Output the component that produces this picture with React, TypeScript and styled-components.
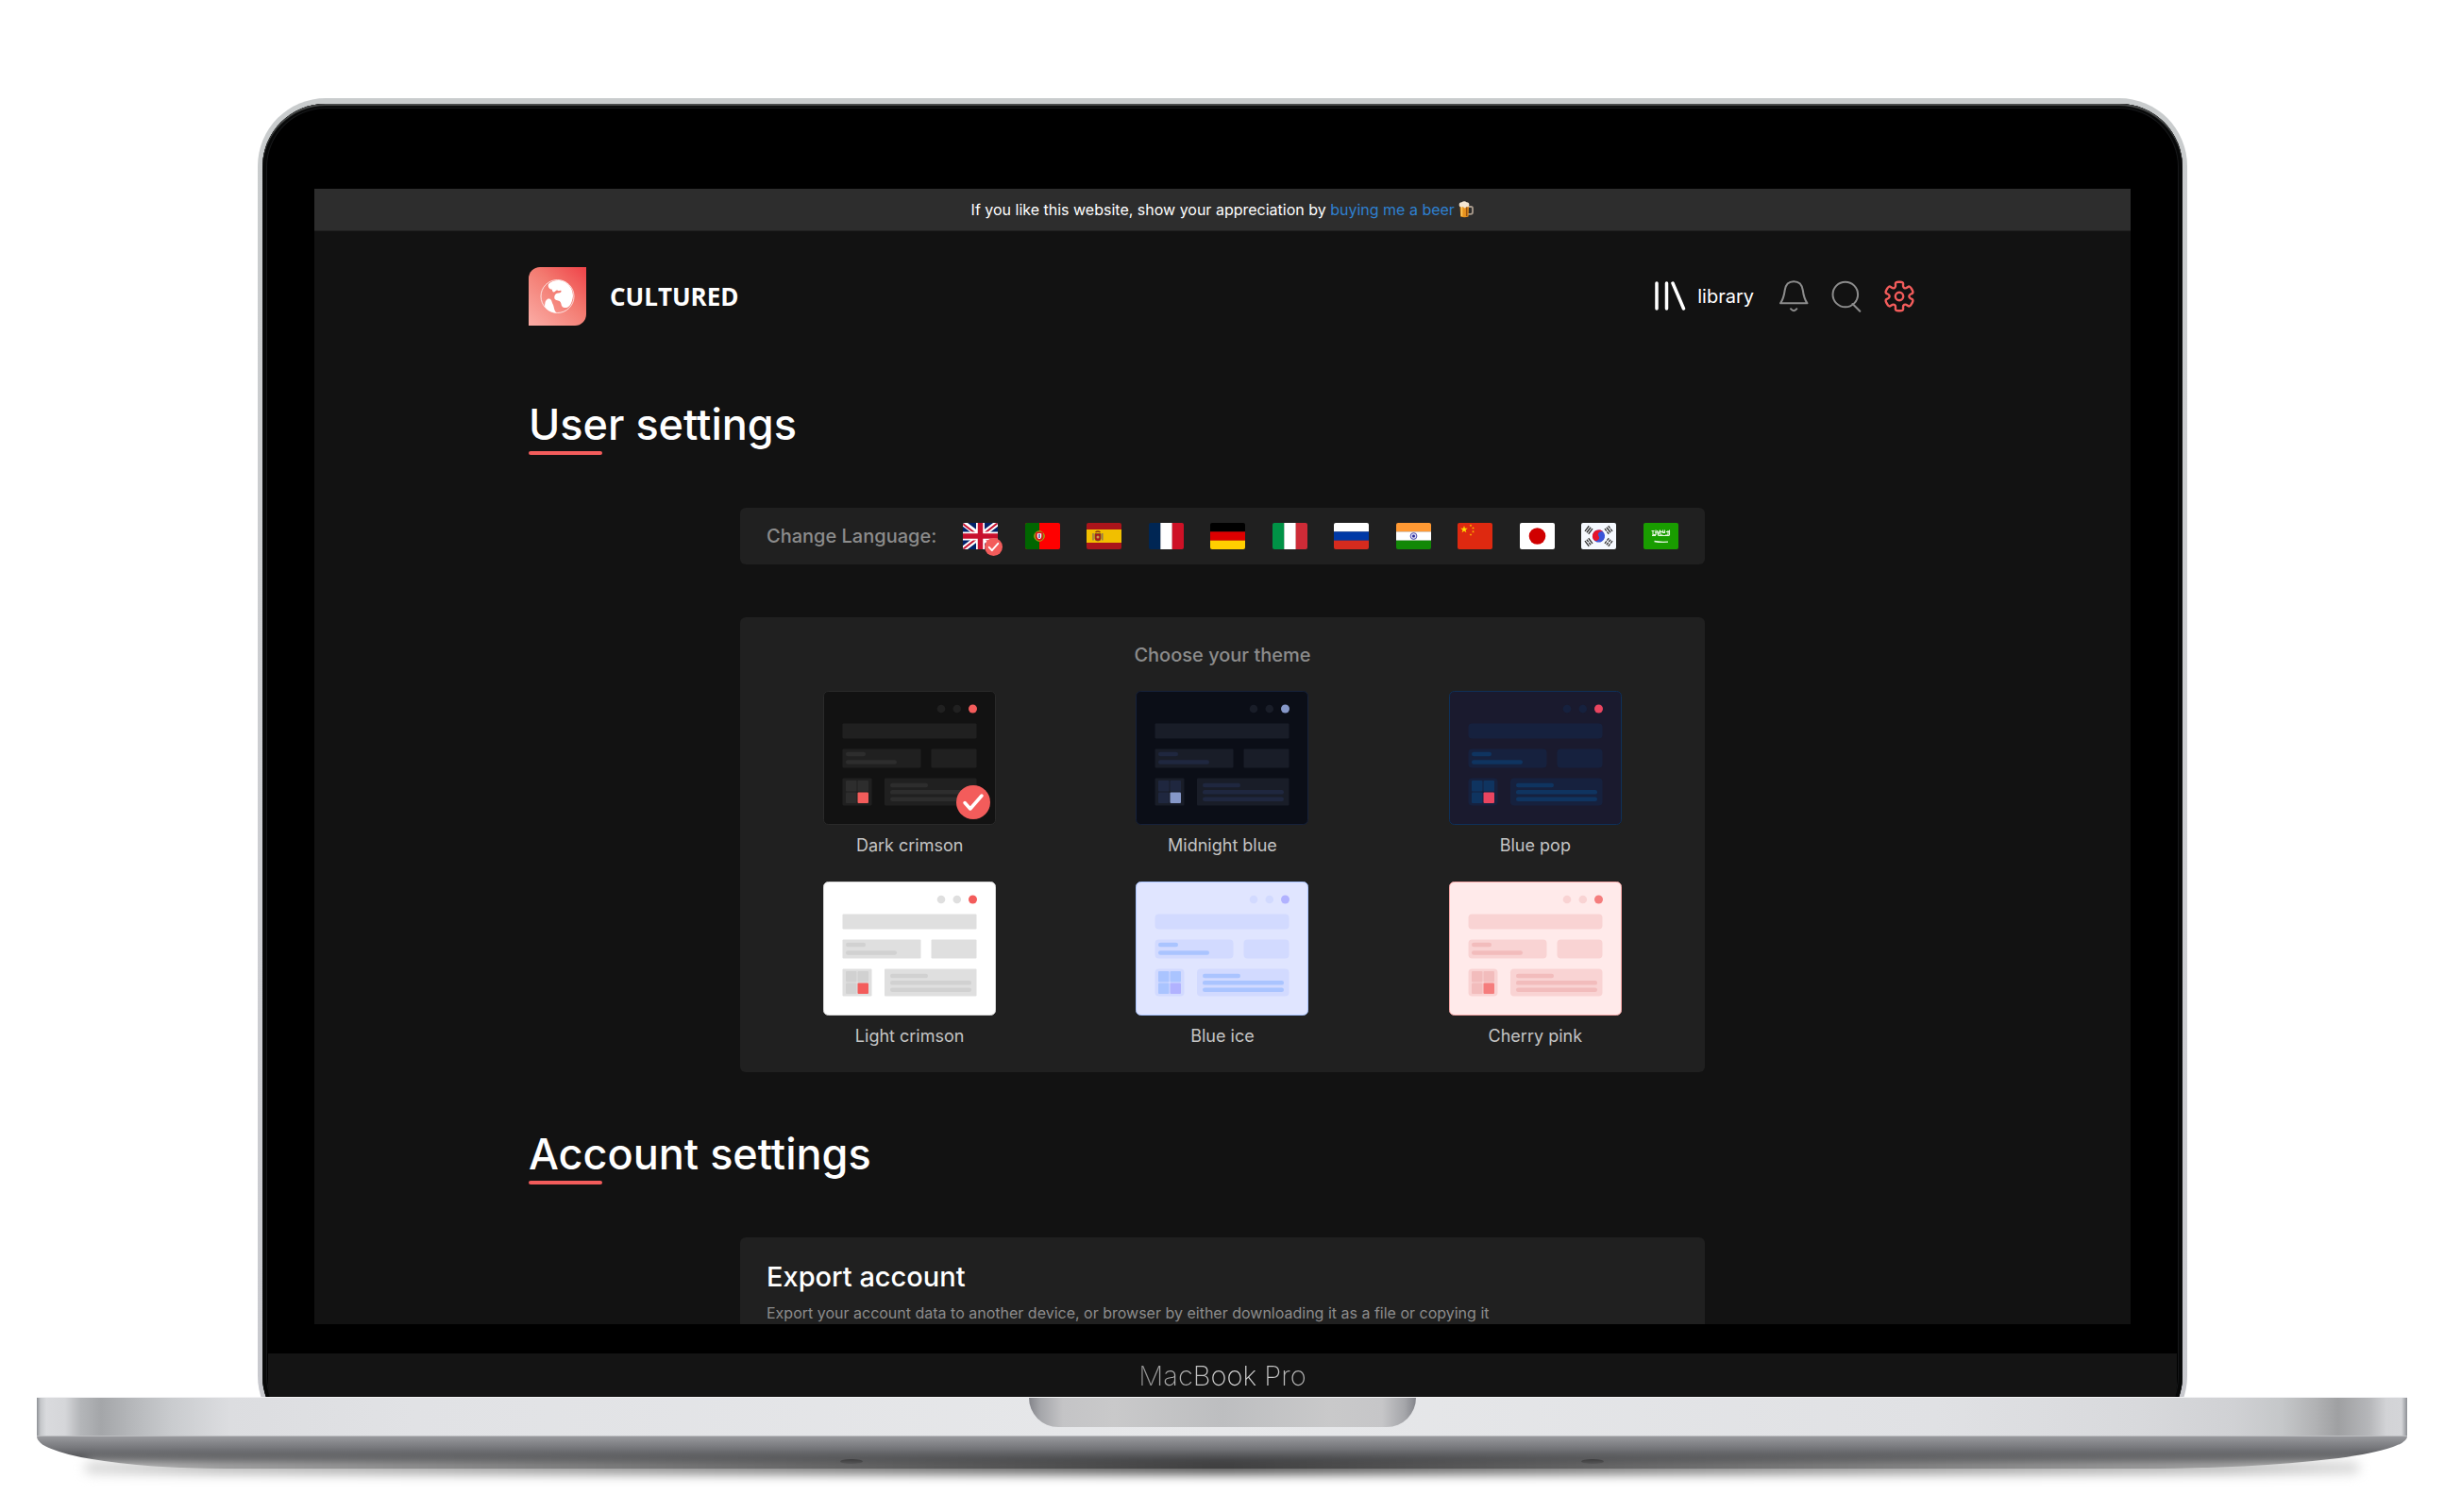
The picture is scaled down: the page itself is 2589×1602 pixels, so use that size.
import React, { useState } from 'react';
import styled, { createGlobalStyle, css } from 'styled-components';

const c = {
  bg: '#121212',
  panel: '#202020',
  banner: '#2d2d2d',
  accent: '#f35c5b',
  muted: '#8c8c8c',
  label: '#c4c4c4',
  link: '#2f80d0',
};

const GlobalStyle = createGlobalStyle`
  * { box-sizing: border-box; }
  body {
    margin: 0;
    background: #fff;
    font-family: Inter, "Liberation Sans", sans-serif;
  }
  h1, h2, h3, p, ul { margin: 0; padding: 0; }
  h1, h2, h3 { font-weight: 500; }
  ul { list-style: none; }
  svg { display: block; }
  button { border: 0; padding: 0; background: none; color: inherit; font: inherit; cursor: pointer; }
  a { color: inherit; text-decoration: none; }
`;

/* ---------- laptop ---------- */

const Stage = styled.div`
  padding: 104px 39px 32px;
  overflow: hidden;
`;

const Lid = styled.div`
  margin: 0 233px -50px 234px;
  padding: 6px 5px 5px;
  border-radius: 72px;
  background: linear-gradient(180deg, #c9cccd, #cdced2 60%, #c8c9ce);
`;

const Bezel = styled.div`
  padding: 90px 55px 0;
  border-radius: 67px;
  background: #000;
  box-shadow: inset 0 2px 1px #4c4e4e, inset 0 0 0 4px #070808, inset 0 0 0 5px #17181a;
`;

const Screen = styled.div`
  aspect-ratio: 16 / 10;
  overflow: hidden;
  background: ${c.bg};
  color: #fff;
`;

const Chin = styled.div`
  margin: 31px -49px 0;
  height: 91px;
  padding-top: 6px;
  border-radius: 0 0 58px 58px;
  background: #141414;
  text-align: center;
  font-size: 29px;
  font-weight: 200;
  line-height: 36px;
`;

const Model = styled.span`
  background: linear-gradient(90deg, #8f8f8f, #dcdcdc 55%, #b0b0b0);
  background-clip: text;
  color: transparent;
`;

const Base = styled.div`
  position: relative;
`;

const Deck = styled.div`
  position: relative;
  display: flex;
  justify-content: center;
  height: 42px;
  border-top: 1px solid #f2f2f3;
  border-bottom: 1px solid #bcbdc0;
  background: linear-gradient(
    90deg,
    #8d9095 0,
    #c5c7ca 4px,
    #d9dadd 10px,
    #d5d6d9 30px,
    #b4b6b9 46px,
    #a4a6a9 68px,
    #b8babd 106px,
    #c9cbce 142px,
    #dcdde0 204px,
    #e1e2e5 400px,
    #e7e8ea 50%,
    #e0e1e4 calc(100% - 500px),
    #d8d9dc calc(100% - 283px),
    #d0d1d4 calc(100% - 183px),
    #c5c7c9 calc(100% - 133px),
    #b1b2b4 calc(100% - 97px),
    #9fa0a2 calc(100% - 73px),
    #b6b7ba calc(100% - 40px),
    #d2d3d6 calc(100% - 22px),
    #d4d5d8 calc(100% - 6px),
    #8d9095 100%
  );
`;

const Notch = styled.div`
  width: 410px;
  height: 31px;
  border-radius: 0 0 36px 36px;
  background: linear-gradient(90deg, #83848a, #a5a6aa 12px, #c4c4c6 36px, #c9c9ca 90px, #bdbec0 50%, #c9c9ca calc(100% - 90px), #c6c6c8 calc(100% - 36px), #a5a6aa calc(100% - 12px), #83848a);
`;

const Underside = styled.div`
  position: relative;
  display: flex;
  justify-content: space-between;
  align-items: flex-end;
  height: 34px;
  padding: 0 851px 5px;
  border-radius: 0 0 280px 200px / 0 0 34px 34px;
  background: linear-gradient(180deg, #98999d, #727377 40%, #47484b 75%, #2a2b2d);
`;

const Foot = styled.i`
  width: 24px;
  height: 5px;
  border-radius: 50%;
  background: #1d1d1f;
`;

const Shadow = styled.div`
  height: 14px;
  margin: -8px 50px 0;
  border-radius: 50px;
  background: linear-gradient(90deg, #ddd, #bbb 6%, #8a8a8a 25%, #444 50%, #8a8a8a 75%, #bbb 94%, #ddd);
  filter: blur(6px);
`;

/* ---------- page ---------- */

const Banner = styled.p`
  padding: 10px 0;
  border-bottom: 1px solid #212121;
  background: ${c.banner};
  font-size: 16px;
  line-height: 24px;
  text-align: center;

  svg {
    display: inline-block;
    vertical-align: -3px;
  }
`;

const BannerLink = styled.a`
  color: ${c.link};
`;

const Container = styled.div`
  width: 77%;
  max-width: 1470px;
  margin: 0 auto;
`;

const Header = styled.header`
  display: flex;
  justify-content: space-between;
  align-items: center;
  padding: 38px 0;
`;

const Brand = styled.a`
  display: flex;
  align-items: center;
  gap: 24px;
  font-family: "Open Sans", "Noto Sans", sans-serif;
  font-size: 26px;
  font-weight: 700;
  line-height: 32px;
`;

const Nav = styled.nav`
  display: flex;
  align-items: center;
  gap: 24px;
  padding-right: 2px;
  font-size: 20px;
  line-height: 24px;
`;

const LibraryLink = styled.a`
  display: flex;
  align-items: center;
  gap: 12px;
  padding-right: 2px;
`;

const NavButton = styled.button<{ $active?: boolean }>`
  color: ${(p) => (p.$active ? c.accent : c.muted)};
`;

const Main = styled.main`
  display: flex;
  flex-direction: column;
  gap: 59px;
  padding-top: 39px;
`;

const Section = styled.section`
  display: flex;
  flex-direction: column;
  align-items: center;
  gap: 56px;
`;

const Title = styled.h1`
  align-self: stretch;
  font-size: 45px;
  line-height: 56px;

  &::after {
    content: '';
    display: block;
    width: 78px;
    height: 4px;
    border-radius: 2px;
    background: ${c.accent};
  }
`;

const panel = css`
  width: 100%;
  max-width: 1022px;
  border-radius: 6px;
  background: ${c.panel};
`;

const LanguagePanel = styled.div`
  ${panel}
  display: flex;
  align-items: center;
  gap: 28px;
  padding: 16px 28px;
  color: ${c.muted};
  font-size: 20px;
  font-weight: 500;
  line-height: 28px;
`;

const Flags = styled.ul`
  flex: 1;
  display: flex;
  justify-content: space-between;
`;

const FlagButton = styled.button`
  position: relative;
  display: block;
`;

const FlagArt = styled.svg`
  width: 37px;
  height: 28px;
  border-radius: 2px;
`;

const Badge = styled.svg<{ $small?: boolean }>`
  position: absolute;
  ${(p) =>
    p.$small
      ? css`
          right: -5px;
          bottom: -7px;
          width: 19px;
        `
      : css`
          right: 6px;
          bottom: 6px;
          width: 36px;
        `}
`;

const ThemePanel = styled.div`
  ${panel}
  padding: 28px 14px 26px;
`;

const PanelTitle = styled.h2`
  color: ${c.muted};
  font-size: 20px;
  line-height: 24px;
  text-align: center;
`;

const ThemeGrid = styled.div`
  display: grid;
  grid-template-columns: repeat(3, 1fr);
  gap: 26px 0;
  justify-items: center;
  padding-top: 26px;
`;

const ThemeButton = styled.button`
  display: grid;
  justify-items: center;
  gap: 10px;
  color: ${c.label};
  font-size: 18px;
  font-weight: 400;
  line-height: 24px;
`;

const Preview = styled.span`
  position: relative;
  display: block;
`;

const ExportPanel = styled.div`
  ${panel}
  display: grid;
  gap: 8px;
  padding: 24px 28px;
`;

const ExportTitle = styled.h3`
  font-size: 29px;
  line-height: 36px;
`;

const ExportText = styled.p`
  color: ${c.muted};
  font-size: 16px;
  line-height: 24px;
`;

/* ---------- drawings ---------- */

const Beer = () => (
  <svg width="16" height="18" viewBox="0 0 16 18" aria-label="beer" role="img">
    <path d="M10 6h3.2c1 0 1.8.8 1.8 1.8v4c0 1.2-.8 2-2 2H10" fill="none" stroke="#a89a8c" strokeWidth="1.8" />
    <path d="M1.5 4h9.500l-.5 12.500q-4.200 1.500-8.300 0z" fill="#e8931f" />
    <path d="M3.500 6v10" stroke="#ffc95a" strokeWidth="1.5" />
    <path d="M8.700 6v10" stroke="#9c5410" strokeWidth="1.5" />
    <path d="M1 5.500C0 3 1.500 1 3.500 1.300 5-.2 7.500 0 8.500 1.200c2.500-.2 3.500 2 2.500 4.300-1 1.300-2 .2-3 .9-1 2-2.500 1-3-.3-1.500.7-3 .4-4-.6z" fill="#f4e6d2" />
  </svg>
);

const Logo = () => (
  <svg width="62" height="62" viewBox="0 0 62 62" aria-hidden="true">
    <defs>
      <linearGradient id="logo" x1="1" y1="0" x2="0.1" y2="1">
        <stop offset="0" stopColor="#ef4248" />
        <stop offset="0.45" stopColor="#f37a70" />
        <stop offset="1" stopColor="#faa9a2" />
      </linearGradient>
    </defs>
    <path d="M12 0H61V50A12 12 0 0 1 49 62H0V12A12 12 0 0 1 12 0z" fill="url(#logo)" />
    <circle cx="30.5" cy="31" r="17.5" fill="none" stroke="#fff" strokeOpacity=".75" />
    <path
      d="M21 18C24 14.500 29 13.500 33 14c8 1 14 8 14 16.500C46.500 36 44.500 41 41.500 42.500c-2 1-5 .8-6.200-1-1-1.700-.5-4-2.600-5.500-2-.8-4.700-.6-5.400-3-.4-2.700.8-4.600 2.700-5.300 2-.2 4.300-.4 4.600-2.300-1-1.500-2.400.8-3.800-.6-1.600-1.600-2.800 2.300-5 1.500-1.300-1.200-.3-2-1.500-2.700-2.300 0-4.300-2.800-3.300-5.600z"
      fill="#fff"
    />
    <path d="M18.700 35c1.300-2.200 4.300-2 5.300 0 .7 1.800 1 3 2 5 1.200 3 .7 5.500 3.300 8.400-5-.2-9-2.200-12-6-.6-2.400.2-3.600.2-4.600 0-1 .5-1.700 1.200-2.800z" fill="#fff" />
  </svg>
);

const LibraryIcon = () => (
  <svg width="33" height="34" viewBox="0 0 33 34" fill="none" stroke="#fff" strokeWidth="3.5" strokeLinecap="round" aria-hidden="true">
    <path d="M2 3v27M12.500 3v27M19 3l11.500 27" />
  </svg>
);

const BellIcon = () => (
  <svg width="32" height="34" viewBox="0 0 32 34" fill="none" stroke="currentColor" strokeWidth="2" strokeLinecap="round" strokeLinejoin="round" aria-hidden="true">
    <path d="M2 24.300H30.500C27 19.500 26.500 16 25.800 10.500 25 4.500 21.500 1.200 16.200 1.200S7.500 4.500 6.700 10.500C6 16 5.500 19.500 2 24.300z" />
    <path d="M13 30.200q3.200 4 6.400 0" />
  </svg>
);

const SearchIcon = () => (
  <svg width="32" height="34" viewBox="0 0 32 34" fill="none" stroke="currentColor" strokeWidth="2" strokeLinecap="round" aria-hidden="true">
    <circle cx="14.8" cy="15" r="13.3" />
    <path d="M22.500 25l7.800 7.800" />
  </svg>
);

const gearPath = (() => {
  const pts: [number, number][] = [];
  const ring: [number, number][] = [[-21, 10.5], [-16, 15.8], [16, 15.8], [21, 10.5]];
  for (let i = 0; i < 6; i++) {
    ring.forEach(([a, r]) => {
      const t = ((i * 60 + a - 90) * Math.PI) / 180;
      pts.push([16 + r * Math.cos(t), 17 + r * Math.sin(t)]);
    });
  }
  const mix = (a: [number, number], b: [number, number], k: number) =>
    `${(a[0] + (b[0] - a[0]) * k).toFixed(2)} ${(a[1] + (b[1] - a[1]) * k).toFixed(2)}`;
  return (
    pts
      .map((p, i) => {
        const prev = pts[(i + pts.length - 1) % pts.length];
        const next = pts[(i + 1) % pts.length];
        return `${i ? 'L' : 'M'}${mix(prev, p, 0.6)}Q${mix(p, p, 0)} ${mix(p, next, 0.4)}`;
      })
      .join('') + 'z'
  );
})();

const GearIcon = () => (
  <svg width="32" height="34" viewBox="0 0 32 34" fill="none" stroke="currentColor" strokeWidth="2.4" strokeLinejoin="round" aria-hidden="true">
    <path d={gearPath} />
    <circle cx="16" cy="17" r="4.2" />
  </svg>
);

const Check = ({ small }: { small?: boolean }) => (
  <Badge $small={small} viewBox="0 0 36 36" aria-hidden="true">
    <circle cx="18" cy="18" r="18" fill={c.accent} />
    <path d="M9 18.500l5.800 6.500L27 11" fill="none" stroke="#fff" strokeWidth="3.5" strokeLinecap="round" strokeLinejoin="round" />
  </Badge>
);

const Bars = ({ colors, vertical }: { colors: string[]; vertical?: boolean }) => (
  <>
    {colors.map((fill, i) =>
      vertical ? (
        <rect key={i} x={i * 12.34} width="12.5" height="28" fill={fill} />
      ) : (
        <rect key={i} y={i * 9.33} width="37" height="9.5" fill={fill} />
      ),
    )}
  </>
);

const star = (x: number, y: number, r: number) =>
  Array.from({ length: 10 }, (_, i) => {
    const t = (i * Math.PI) / 5 - Math.PI / 2;
    const q = i % 2 ? r * 0.4 : r;
    return `${(x + q * Math.cos(t)).toFixed(1)},${(y + q * Math.sin(t)).toFixed(1)}`;
  }).join(' ');

const languages: { name: string; art: React.ReactNode }[] = [
  {
    name: 'English',
    art: (
      <>
        <rect width="37" height="28" fill="#012169" />
        <path d="M0 0l37 28M37 0L0 28" stroke="#fff" strokeWidth="6" />
        <path d="M0 1l17 13M20 14l17 13M37 0L19 14M18 14L0 28" stroke="#c8102e" strokeWidth="2" />
        <path d="M18.500 0v28M0 14h37" stroke="#fff" strokeWidth="9" />
        <path d="M18.500 0v28M0 14h37" stroke="#c8102e" strokeWidth="5.5" />
      </>
    ),
  },
  {
    name: 'Português',
    art: (
      <>
        <rect width="37" height="28" fill="#f00" />
        <rect width="15" height="28" fill="#060" />
        <circle cx="15" cy="14" r="5.3" fill="#7a7d10" stroke="#b5a010" />
        <path d="M12 10.500h6v4q0 3-3 3.500-3-.5-3-3.500z" fill="#fff" stroke="#e0101a" strokeWidth="1.6" />
        <path d="M15 12v4" stroke="#2b3b8c" strokeWidth="1.3" />
      </>
    ),
  },
  {
    name: 'Español',
    art: (
      <>
        <rect width="37" height="28" fill="#aa151b" />
        <rect y="7" width="37" height="14" fill="#f1bf00" />
        <path d="M7 11v7.500M16.800 11v7.500" stroke="#8d7357" strokeWidth="1.4" />
        <path d="M9 11.500h6v5q0 2.500-3 2.500t-3-2.500z" fill="#ad1519" stroke="#6d4b2d" strokeWidth=".8" />
        <path d="M9.500 10q2.500-2 5 0" stroke="#8b3a16" strokeWidth="1.6" fill="none" />
        <circle cx="12" cy="15" r="1.5" fill="#c9a24a" />
      </>
    ),
  },
  { name: 'Français', art: <Bars vertical colors={['#002654', '#fff', '#ce1126']} /> },
  { name: 'Deutsch', art: <Bars colors={['#000', '#d00', '#ffce00']} /> },
  { name: 'Italiano', art: <Bars vertical colors={['#009246', '#fff', '#ce2b37']} /> },
  { name: 'Русский', art: <Bars colors={['#fff', '#0039a6', '#d52b1e']} /> },
  {
    name: 'हिन्दी',
    art: (
      <>
        <Bars colors={['#f93', '#fff', '#128807']} />
        <circle cx="18.5" cy="14" r="3.4" fill="#dcdcf2" stroke="#5050b0" />
        <circle cx="18.5" cy="14" r="1.5" fill="#2a2a9a" />
      </>
    ),
  },
  {
    name: '中文',
    art: (
      <>
        <rect width="37" height="28" fill="#de2910" />
        <polygon points={star(7, 7, 4)} fill="#ffde00" />
        {[[14, 2.8], [16.5, 5.5], [16.5, 9.3], [14, 12.5]].map(([x, y]) => (
          <polygon key={y} points={star(x, y, 1.5)} fill="#ffb400" />
        ))}
      </>
    ),
  },
  {
    name: '日本語',
    art: (
      <>
        <rect width="37" height="28" fill="#fff" />
        <circle cx="18.5" cy="14" r="8.8" fill="#d00000" />
      </>
    ),
  },
  {
    name: '한국어',
    art: (
      <>
        <rect width="37" height="28" fill="#f5f9ff" />
        <g transform="rotate(-30 18.5 14)">
          <circle cx="18.5" cy="14" r="6.6" fill="#3b55d9" />
          <path d="M11.900 14a6.600 6.600 0 0 1 13.200 0 3.300 3.300 0 0 0-6.600 0 3.300 3.300 0 0 1-6.600 0z" fill="#e6142b" />
        </g>
        <g stroke="#333" strokeWidth="1.3">
          <g transform="translate(8 7.5) rotate(-52)"><path d="M-3.500-2.400h7M-3.500 0h7M-3.500 2.400h7" /></g>
          <g transform="translate(29 20.5) rotate(-52)"><path d="M-3.500-2.400h3M.5-2.400h3M-3.500 0h3M.5 0h3M-3.500 2.400h3M.5 2.400h3" /></g>
          <g transform="translate(29 7.5) rotate(52)"><path d="M-3.500-2.400h3M.5-2.400h3M-3.500 0h7M-3.500 2.400h3M.5 2.400h3" /></g>
          <g transform="translate(8 20.5) rotate(52)"><path d="M-3.500-2.400h7M-3.500 0h3M.5 0h3M-3.500 2.400h7" /></g>
        </g>
      </>
    ),
  },
  {
    name: 'العربية',
    art: (
      <>
        <rect width="37" height="28" fill="#199d00" />
        <path d="M8.500 8.500h3M10 8v4.500h3v-5M14.500 8l1 5.500 2-6M18 8v5h2.500M20.500 7.500v3h2v-3M23 13h3v-5M27.500 7.500v6M9 13.500h4M16 13.500h11M12 10h4M18.500 9.500h3M24 9.500h4" stroke="#e4f5df" strokeWidth="1.1" fill="none" />
        <path d="M11.500 19.500q5 1.200 14.500.7" stroke="#e4f5df" strokeWidth="1.3" fill="none" />
      </>
    ),
  },
];

type Theme = { name: string; bg: string; border: string; block: string; line: string; accent: string; r: number };

const themes: Theme[] = [
  { name: 'Dark crimson', bg: '#121212', border: '#2a2a2a', block: '#202020', line: '#2d2d2d', accent: '#f35c5b', r: 1 },
  { name: 'Midnight blue', bg: '#0b0e17', border: '#16213a', block: '#191d28', line: '#1f273f', accent: '#8698c9', r: 1 },
  { name: 'Blue pop', bg: '#1a1a2e', border: '#0f3058', block: '#16213e', line: '#0f3460', accent: '#e94560', r: 4 },
  { name: 'Light crimson', bg: '#fff', border: '#d6d6d6', block: '#dfdfdf', line: '#d1d1d1', accent: '#f35c5b', r: 1 },
  { name: 'Blue ice', bg: '#e0e5ff', border: '#a9c4ff', block: '#d2daff', line: '#aac4ff', accent: '#b1b2ff', r: 4 },
  { name: 'Cherry pink', bg: '#ffeaea', border: '#f5a5a5', block: '#f9d3d3', line: '#f2bcbc', accent: '#f57d7d', r: 4 },
];

const ThemeArt = ({ t }: { t: Theme }) => (
  <svg width="183" height="142" viewBox="0 0 183 142" aria-hidden="true">
    <rect x=".5" y=".5" width="182" height="141" rx="5" fill={t.bg} stroke={t.border} />
    <circle cx="125" cy="19" r="4.3" fill={t.block} />
    <circle cx="141.8" cy="19" r="4.3" fill={t.block} />
    <circle cx="158.5" cy="19" r="4.5" fill={t.accent} />
    <g fill={t.block}>
      <rect x="20.5" y="34.5" width="142" height="16" rx={t.r} />
      <rect x="20.5" y="61.5" width="83" height="20" rx={t.r} />
      <rect x="114.5" y="61.5" width="48" height="20" rx={t.r} />
      <rect x="20.5" y="92.5" width="31" height="29" rx={t.r} />
      <rect x="65" y="92.5" width="97.5" height="29" rx={t.r} />
    </g>
    <g fill={t.line}>
      <rect x="24" y="64.7" width="21" height="4.5" rx="2.2" />
      <rect x="24" y="73.3" width="54" height="4.5" rx="2.2" />
      <rect x="71" y="97.7" width="40" height="4.5" rx="2.2" />
      <rect x="71" y="105.1" width="86" height="4.5" rx="2.2" />
      <rect x="71" y="112.5" width="86" height="4.5" rx="2.2" />
      <rect x="24" y="95" width="11.5" height="11.5" rx="1" />
      <rect x="36.5" y="95" width="11.5" height="11.5" rx="1" />
      <rect x="24" y="107.5" width="11.5" height="11.5" rx="1" />
    </g>
    <rect x="36.5" y="107.5" width="11.5" height="11.5" rx="1" fill={t.accent} />
  </svg>
);

/* ---------- app ---------- */

export default function App() {
  const [language, setLanguage] = useState('English');
  const [theme, setTheme] = useState('Dark crimson');

  return (
    <Stage>
      <GlobalStyle />
      <Lid>
        <Bezel>
          <Screen>
            <Banner>
              If you like this website, show your appreciation by <BannerLink href="#beer">buying me a beer</BannerLink> <Beer />
            </Banner>
            <Container>
              <Header>
                <Brand href="#home">
                  <Logo />
                  CULTURED
                </Brand>
                <Nav>
                  <LibraryLink href="#library">
                    <LibraryIcon />
                    library
                  </LibraryLink>
                  <NavButton aria-label="Notifications"><BellIcon /></NavButton>
                  <NavButton aria-label="Search"><SearchIcon /></NavButton>
                  <NavButton aria-label="Settings" $active><GearIcon /></NavButton>
                </Nav>
              </Header>
              <Main>
                <Section>
                  <Title>User settings</Title>
                  <LanguagePanel>
                    Change Language:
                    <Flags>
                      {languages.map((l) => (
                        <li key={l.name}>
                          <FlagButton aria-label={l.name} aria-pressed={l.name === language} onClick={() => setLanguage(l.name)}>
                            <FlagArt viewBox="0 0 37 28" aria-hidden="true">{l.art}</FlagArt>
                            {l.name === language && <Check small />}
                          </FlagButton>
                        </li>
                      ))}
                    </Flags>
                  </LanguagePanel>
                  <ThemePanel>
                    <PanelTitle>Choose your theme</PanelTitle>
                    <ThemeGrid>
                      {themes.map((t) => (
                        <ThemeButton key={t.name} aria-pressed={t.name === theme} onClick={() => setTheme(t.name)}>
                          <Preview>
                            <ThemeArt t={t} />
                            {t.name === theme && <Check />}
                          </Preview>
                          {t.name}
                        </ThemeButton>
                      ))}
                    </ThemeGrid>
                  </ThemePanel>
                </Section>
                <Section>
                  <Title as="h2">Account settings</Title>
                  <ExportPanel>
                    <ExportTitle>Export account</ExportTitle>
                    <ExportText>
                      Export your account data to another device, or browser by either downloading it as a file or copying it
                    </ExportText>
                  </ExportPanel>
                </Section>
              </Main>
            </Container>
          </Screen>
          <Chin>
            <Model>MacBook Pro</Model>
          </Chin>
        </Bezel>
      </Lid>
      <Base>
        <Deck>
          <Notch />
        </Deck>
        <Underside>
          <Foot />
          <Foot />
        </Underside>
        <Shadow />
      </Base>
    </Stage>
  );
}
